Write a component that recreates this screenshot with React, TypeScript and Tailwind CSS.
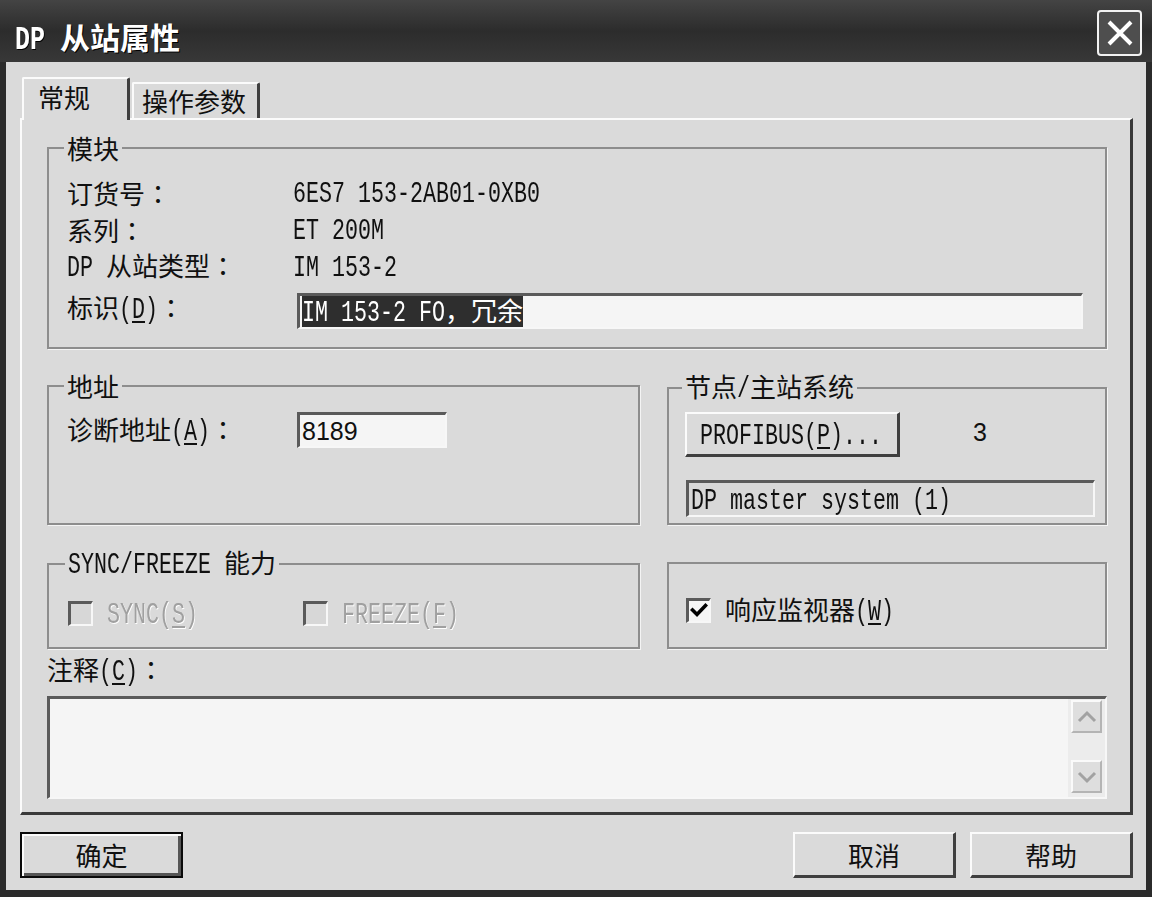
import React from 'react';

// Latin text in the dialog is a narrow mono face (half of a CJK cell)
const LAT = "inline-block whitespace-pre origin-left scale-x-[0.722] font-['Liberation_Mono',monospace] text-[30px]";
const LAT_TITLE = "inline-block whitespace-pre origin-left scale-x-[0.735] font-['Liberation_Mono',monospace] text-[34px] font-bold";

const SUNK = 'border-t-[3px] border-l-[3px] border-t-[#5a5a5a] border-l-[#5a5a5a] border-b-2 border-r-2 border-b-[#f7f7f7] border-r-[#f7f7f7]';
const RAISED = 'border-t-2 border-l-2 border-t-[#fbfbfb] border-l-[#fbfbfb] border-b-[3px] border-r-[3px] border-b-[#3f3f3f] border-r-[#3f3f3f]';

function Lat({ t, u = false, title = false }: { t: string; u?: boolean; title?: boolean }) {
  const half = title ? 15 : 13;
  return (
    <span className="inline-block whitespace-pre" style={{ width: t.length * half }}>
      <span className={`${title ? LAT_TITLE : LAT} ${u ? 'underline decoration-2 underline-offset-[3px]' : ''}`}>{t}</span>
    </span>
  );
}

// "&X" marks the accelerator letter, like a Win32 resource string
function Txt({ s, title = false }: { s: string; title?: boolean }) {
  const parts: React.ReactNode[] = [];
  let i = 0;
  while (i < s.length) {
    if (s[i] === '&') {
      parts.push(<Lat key={i} t={s[i + 1]} u title={title} />);
      i += 2;
      continue;
    }
    if (s[i] === '：') {
      // centred full-width colon, as in the old GB fonts
      parts.push(<span key={i} className="font-['Noto_Sans_CJK_TC',sans-serif]">：</span>);
      i += 1;
      continue;
    }
    const ascii = s.charCodeAt(i) < 128;
    let j = i;
    while (j < s.length && s[j] !== '&' && s[j] !== '：' && (s.charCodeAt(j) < 128) === ascii) j++;
    const chunk = s.slice(i, j);
    parts.push(ascii ? <Lat key={i} t={chunk} title={title} /> : <span key={i}>{chunk}</span>);
    i = j;
  }
  return <span className="whitespace-nowrap">{parts}</span>;
}

function Group({ title, className, children }: { title?: string; className: string; children: React.ReactNode }) {
  return (
    <fieldset className={`min-w-0 border-2 border-[#8d8d8d] shadow-[1px_1px_0_#f4f4f4] ${className}`}>
      {title && (
        <legend className="-ml-[3px] px-[3px] leading-[30px]">
          <Txt s={title} />
        </legend>
      )}
      {children}
    </fieldset>
  );
}

function Check({ label, checked = false, disabled = false }: { label: string; checked?: boolean; disabled?: boolean }) {
  return (
    <div className="flex items-center gap-[14px]">
      <span className={`w-[25px] h-[25px] flex items-center justify-center ${SUNK} ${disabled ? 'bg-[#d7d7d7]' : 'bg-[#f5f5f5]'}`}>
        {checked && (
          <svg width="18" height="18" viewBox="0 0 18 18">
            <path d="M2.5 8 L7 12.5 L15.5 3.5" fill="none" stroke="#000" strokeWidth="3.6" strokeLinecap="square" />
          </svg>
        )}
      </span>
      <span className={disabled ? 'text-[#a0a0a0] [text-shadow:1px_1px_0_#fff]' : ''}>
        <Txt s={label} />
      </span>
    </div>
  );
}

function Row({ label, value }: { label: string; value: string }) {
  return (
    <div className="flex items-center h-[37px]">
      <div className="w-[226px]">
        <Txt s={label} />
      </div>
      <Txt s={value} />
    </div>
  );
}

function ScrollBtn({ up }: { up?: boolean }) {
  return (
    <div className="w-[31px] h-[33px] flex items-center justify-center bg-[#dedede] border-t-2 border-l-2 border-t-[#fafafa] border-l-[#fafafa] border-b-2 border-r-2 border-b-[#b4b4b4] border-r-[#b4b4b4]">
      <svg width="22" height="14" viewBox="0 0 22 14">
        <path d={up ? 'M3 11 L11 3 L19 11' : 'M3 3 L11 11 L19 3'} fill="none" stroke="#a2a2a2" strokeWidth="3" />
      </svg>
    </div>
  );
}

export default function App() {
  return (
    <div className="w-[1152px] h-[897px] bg-[#2b2b2b] flex flex-col font-['Noto_Sans_CJK_SC',sans-serif] text-[26px] leading-[30px] text-[#101010]">
      {/* title bar */}
      <div className="h-[62px] flex items-start justify-between pl-[15px] pr-[10px] bg-gradient-to-b from-[#444444] via-[#2c2c2c] to-[#383838]">
        <div className="pt-[18px] text-white text-[30px] leading-[36px] font-bold [text-shadow:1px_1px_0_#000]">
          <Txt s="DP 从站属性" title />
        </div>
        <button className="mt-[10px] w-[45px] h-[46px] flex items-center justify-center rounded-[4px] border-2 border-[#f2f2f2] bg-[#4e4e4e]">
          <svg width="26" height="26" viewBox="0 0 26 26">
            <path d="M2 2 L24 24 M24 2 L2 24" stroke="#fff" strokeWidth="4" />
          </svg>
        </button>
      </div>

      {/* dialog body */}
      <div className="flex-1 mx-[6px] mb-[7px] bg-[#dadada] flex flex-col pt-[15px] pl-[14px] pr-[13px]">
        {/* tabs */}
        <div className="flex items-end h-[41px] pl-[2px]">
          <div className="relative z-10 -mb-[2px] w-[108px] h-[43px] pl-[14px] pt-[3px] bg-[#dadada] rounded-t-[2px] border-t-2 border-l-2 border-t-[#fbfbfb] border-l-[#fbfbfb] border-r-[3px] border-r-[#3f3f3f]">
            常规
          </div>
          <div className="ml-[2px] w-[128px] h-[36px] pl-[8px] flex items-center rounded-t-[2px] border-t-2 border-l-2 border-t-[#fbfbfb] border-l-[#fbfbfb] border-r-[3px] border-r-[#3f3f3f]">
            操作参数
          </div>
        </div>

        {/* tab page */}
        <div className="h-[697px] flex flex-col pl-[25px] pr-[23px] pt-[13px] border-t-2 border-l-2 border-t-[#fbfbfb] border-l-[#fbfbfb] border-r-[3px] border-b-[3px] border-r-[#3a3a3a] border-b-[#3a3a3a]">
          <Group title="模块" className="pl-[18px] pt-[11px] pb-[18px]">
            <Row label="订货号：" value="6ES7 153-2AB01-0XB0" />
            <Row label="系列：" value="ET 200M" />
            <Row label="DP 从站类型：" value="IM 153-2" />
            <div className="flex items-center mt-[8px]">
              <div className="w-[230px] -mt-[5px]">
                <Txt s="标识(&D)：" />
              </div>
              <div className={`w-[786px] h-[36px] flex items-center pl-[2px] bg-[#f5f5f5] ${SUNK}`}>
                <span className="bg-[#2e2e2e] text-white leading-[28px]">
                  <Txt s="IM 153-2 FO，冗余" />
                </span>
              </div>
            </div>
          </Group>

          <div className="flex gap-[27px] mt-[22px]">
            <Group title="地址" className="w-[593px] h-[154px] pl-[18px] pt-[11px]">
              <div className="flex items-center">
                <div className="w-[230px]">
                  <Txt s="诊断地址(&A)：" />
                </div>
                <div className={`w-[150px] h-[36px] flex items-center pl-[2px] bg-[#f5f5f5] font-['Liberation_Sans',sans-serif] text-[25px] ${SUNK}`}>
                  8189
                </div>
              </div>
            </Group>
            <Group title="节点/主站系统" className="w-[440px] h-[154px] pl-[16px] pr-[10px] pt-[8px]">
              <div className="flex items-center">
                <button className={`w-[215px] h-[45px] flex items-center pl-[13px] bg-[#dadada] ${RAISED}`}>
                  <Txt s="PROFIBUS(&P)..." />
                </button>
                <span className="ml-[73px] -mt-[6px] font-['Liberation_Sans',sans-serif] text-[25px]">3</span>
              </div>
              <div className={`mt-[23px] ml-[1px] w-[409px] h-[37px] flex items-center pl-[2px] bg-[#d8d8d8] ${SUNK}`}>
                <Txt s="DP master system (1)" />
              </div>
            </Group>
          </div>

          <div className="flex items-start gap-[27px] mt-[22px]">
            <Group title="SYNC/FREEZE 能力" className="w-[593px] h-[102px] pl-[19px] pt-[17px]">
              <div className="flex items-center">
                <div className="w-[235px]">
                  <Check label="SYNC(&S)" disabled />
                </div>
                <Check label="FREEZE(&F)" disabled />
              </div>
            </Group>
            <div className="mt-[15px] w-[440px] h-[87px] pl-[17px] pt-[30px] border-2 border-[#8d8d8d] shadow-[1px_1px_0_#f4f4f4]">
              <Check label="响应监视器(&W)" checked />
            </div>
          </div>

          <div className="mt-[5px]">
            <Txt s="注释(&C)：" />
          </div>
          <div className={`mt-[9px] h-[103px] flex bg-[#f5f5f5] ${SUNK}`}>
            <div className="flex-1" />
            <div className="w-[37px] flex flex-col justify-between items-center pt-[1px] pb-[4px] bg-[#ececec]">
              <ScrollBtn up />
              <ScrollBtn />
            </div>
          </div>
        </div>

        {/* dialog buttons */}
        <div className="flex gap-[14px] mt-[17px] h-[46px]">
          <button className="w-[163px] h-[46px] flex items-center justify-center bg-[#dadada] border-2 border-[#0a0a0a] shadow-[inset_2px_2px_0_#fbfbfb,inset_-3px_-3px_0_#555555]">
            确定
          </button>
          <button className={`ml-auto w-[163px] h-[46px] flex items-center justify-center bg-[#dadada] ${RAISED}`}>取消</button>
          <button className={`w-[163px] h-[46px] flex items-center justify-center bg-[#dadada] ${RAISED}`}>帮助</button>
        </div>
      </div>
    </div>
  );
}
